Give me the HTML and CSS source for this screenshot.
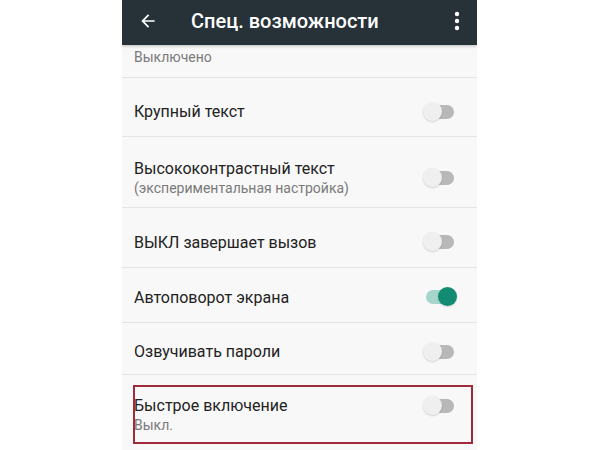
FILE: index.html
```html
<!DOCTYPE html>
<html lang="ru">
<head>
<meta charset="utf-8" />
<title>Спец. возможности</title>
<link rel="stylesheet" href="styles.css">
</head>
<body>
<div class="phone">
	<div class="app-bar">
		<svg class="back" width="20" height="20" viewBox="0 0 24 24"><path d="M20 11H7.83l5.59-5.59L12 4l-8 8 8 8 1.41-1.41L7.83 13H20v-2z" fill="#fff"/></svg>
		<span class="bar-title">Спец. возможности</span>
		<svg class="more" width="6" height="20" viewBox="0 0 6 20"><circle cx="3" cy="3" r="2.2" fill="#fff"/><circle cx="3" cy="10" r="2.2" fill="#fff"/><circle cx="3" cy="17" r="2.2" fill="#fff"/></svg>
	</div>
	<ul class="settings">
		<li class="row row-cut">
			<div class="text"><span class="sub">Выключено</span></div>
		</li>
		<li class="row h59">
			<div class="text"><span class="title">Крупный текст</span></div>
			<span class="switch"><i class="track"></i><i class="thumb"></i></span>
		</li>
		<li class="row h71">
			<div class="text">
				<span class="title">Высококонтрастный текст</span>
				<span class="sub">(экспериментальная настройка)</span>
			</div>
			<span class="switch"><i class="track"></i><i class="thumb"></i></span>
		</li>
		<li class="row h60">
			<div class="text"><span class="title">ВЫКЛ завершает вызов</span></div>
			<span class="switch"><i class="track"></i><i class="thumb"></i></span>
		</li>
		<li class="row h55">
			<div class="text"><span class="title">Автоповорот экрана</span></div>
			<span class="switch on"><i class="track"></i><i class="thumb"></i></span>
		</li>
		<li class="row h52">
			<div class="text"><span class="title">Озвучивать пароли</span></div>
			<span class="switch"><i class="track"></i><i class="thumb"></i></span>
		</li>
		<li class="row last">
			<div class="text">
				<span class="title">Быстрое включение</span>
				<span class="sub">Выкл.</span>
			</div>
			<span class="switch"><i class="track"></i><i class="thumb"></i></span>
		</li>
	</ul>
</div>
</body>
</html>
```

FILE: styles.css
```css
html, body {margin: 0; padding: 0; background: #fff;}
ul, li {margin: 0; padding: 0; list-style: none;}

.phone {
	margin-left: 122px;
	width: 355px;
	height: 450px;
	overflow: hidden;
	background: #f8f8f8;
	font-family: Roboto, "Noto Sans", sans-serif;
}

.app-bar {
	height: 45px;
	background: #263238;
	display: flex;
	align-items: center;
	box-shadow: 0 1px 3px rgba(0,0,0,.25);
	position: relative;
	z-index: 2;
}

.app-bar .back {
	margin-left: 16px;
	margin-top: -4px;
}

.app-bar .bar-title {
	margin-left: 33px;
	margin-top: -4px;
	color: #fff;
	font-size: 20px;
	font-weight: 500;
	flex: 1;
}

.app-bar .more {
	margin-right: 17px;
	margin-top: -4px;
}

.row {
	display: flex;
	align-items: center;
	padding-left: 12px;
	padding-top: 9px;
	border-bottom: 1px solid #e4e4e4;
	box-sizing: border-box;
	position: relative;
}

.row-cut {height: 33px; align-items: flex-start; padding-top: 3px;}
.h59 {height: 59px;}
.h71 {height: 71px; padding-top: 11px;}
.h60 {height: 60px;}
.h55 {height: 55px; padding-top: 4px;}
.h52 {height: 52px; padding-top: 6px;}
.last {height: 80px; align-items: flex-start; padding-top: 20px; border-bottom: 0;}

.row .text {
	flex: 1;
	display: flex;
	flex-direction: column;
}

.row .title {
	font-size: 16px;
	color: #222;
	line-height: 21px;
}

.row .sub {
	font-size: 14px;
	color: #7a7a7a;
	line-height: 19px;
}

.last:after {
	content: "";
	position: absolute;
	left: 11px;
	top: 10px;
	width: 336px;
	height: 55px;
	border: 2px solid #9e2a3a;
}

.switch {
	width: 34px;
	height: 20px;
	margin-right: 20px;
	position: relative;
}

.last .switch {margin-top: 1px;}

.switch .track {
	position: absolute;
	left: 3px;
	top: 3px;
	width: 28px;
	height: 14px;
	border-radius: 7px;
	background: #b8b8b8;
}

.switch .thumb {
	position: absolute;
	left: 0;
	top: 0;
	width: 19px;
	height: 19px;
	border-radius: 50%;
	background: #efefef;
	box-shadow: 0 1px 2px rgba(0,0,0,.15);
}

.switch.on .track {background: #a6d6cb;}
.switch.on .thumb {left: 15px; background: #138a72;}
```
